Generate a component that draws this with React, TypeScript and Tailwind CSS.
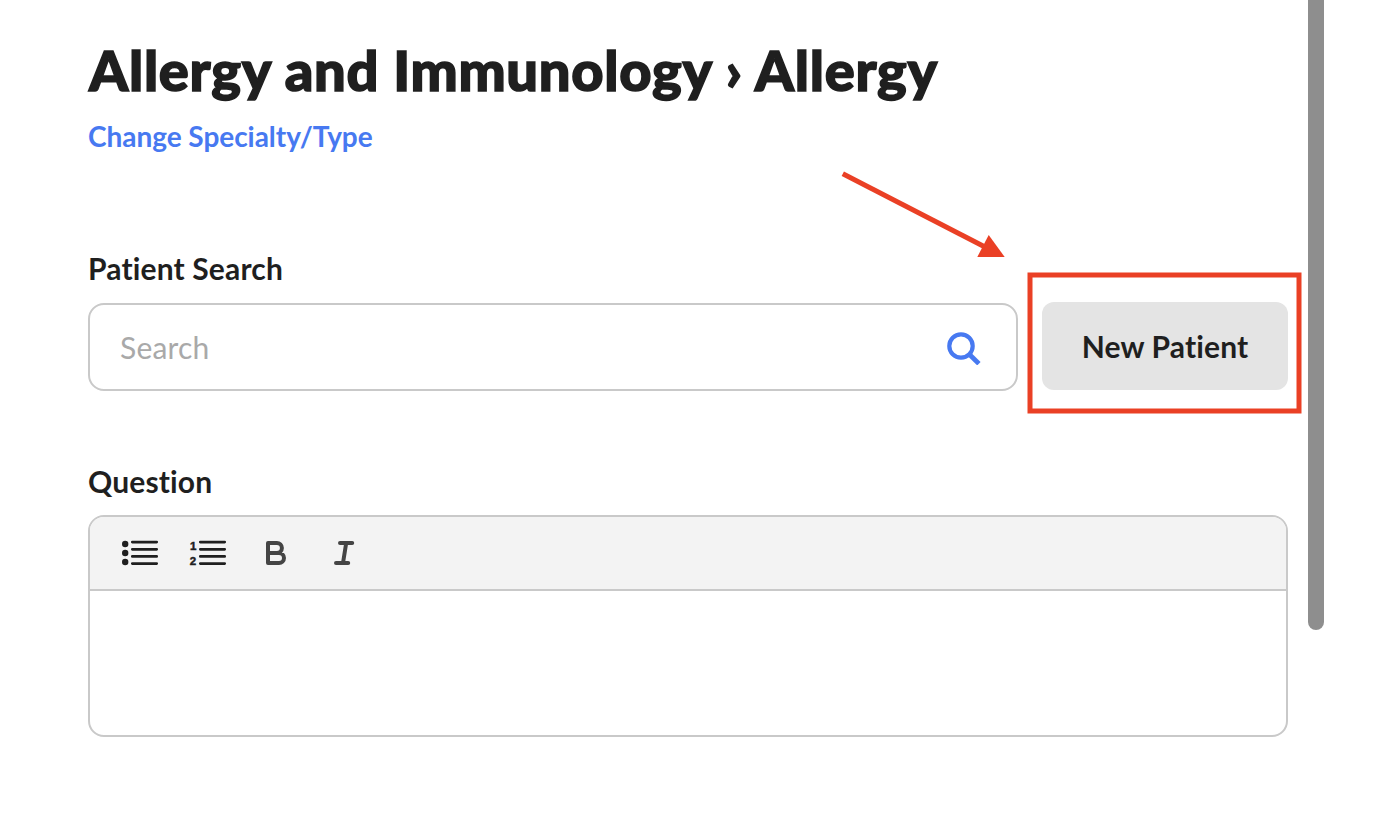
import type { ReactNode } from "react";

function SearchIcon() {
  return (
    <svg width="36" height="36" viewBox="0 0 36 36" fill="none" aria-hidden>
      <circle cx="15" cy="17" r="11.7" stroke="#4779f1" strokeWidth="4.2" />
      <path d="M23 25L32.9 34.7" stroke="#4779f1" strokeWidth="4.8" />
    </svg>
  );
}

function ListLines() {
  return (
    <path
      d="M11.3 7.1H35.7M11.3 14.3H35.7M11.3 21.4H35.7M11.3 28.6H35.7"
      stroke="#1f1f1f"
      strokeWidth="2.7"
      strokeLinecap="round"
    />
  );
}

function BulletListIcon() {
  return (
    <svg width="38" height="36" viewBox="0 0 38 36" aria-hidden>
      <circle cx="4.2" cy="9" r="3.2" fill="#1f1f1f" />
      <circle cx="4.2" cy="18" r="3.2" fill="#1f1f1f" />
      <circle cx="4.2" cy="27" r="3.2" fill="#1f1f1f" />
      <ListLines />
    </svg>
  );
}

function NumberListIcon() {
  return (
    <svg
      width="38"
      height="36"
      viewBox="0 0 38 36"
      className="font-['Liberation_Sans',sans-serif] text-[11.5px] font-bold"
      aria-hidden
    >
      <g fill="#1f1f1f" stroke="#1f1f1f" strokeWidth="0.5">
        <text x="1" y="14.8">1</text>
        <text x="0.7" y="30.1">2</text>
      </g>
      <ListLines />
    </svg>
  );
}

function BoldIcon() {
  return (
    <svg width="38" height="36" viewBox="0 0 38 36" fill="none" aria-hidden>
      <path
        d="M11 8H19.9A5 5 0 0 1 19.9 18H11ZM11 18H22A5 5 0 0 1 22 28H11Z"
        stroke="#444"
        strokeWidth="4"
        strokeLinejoin="round"
      />
    </svg>
  );
}

function ItalicIcon() {
  return (
    <svg width="38" height="36" viewBox="0 0 38 36" fill="none" aria-hidden>
      <path
        d="M15 8H27.2M11 28H23.2M21.2 8L18 28"
        stroke="#444"
        strokeWidth="4"
        strokeLinecap="round"
      />
    </svg>
  );
}

function ToolButton({ label, children }: { label: string; children: ReactNode }) {
  return (
    <button type="button" aria-label={label} className="shrink-0">
      {children}
    </button>
  );
}

/** Red arrow and frame that point out the New Patient button. */
function Callout() {
  return (
    <svg
      width="480"
      height="260"
      viewBox="830 160 480 260"
      fill="none"
      className="pointer-events-none absolute top-40 left-[830px]"
      aria-hidden
    >
      <path d="M842.8 173.8L986 247.5" stroke="#ea4025" strokeWidth="5" />
      <path d="M988.7 235L1004.7 257H977.3Z" fill="#ea4025" />
      <rect x="1030" y="275" width="269" height="136" stroke="#ea4025" strokeWidth="5" />
    </svg>
  );
}

export default function App() {
  return (
    <div className="relative flex h-[838px] w-[1392px] overflow-hidden bg-white font-['Lato',sans-serif] text-[#1f1f1f] [font-variant-ligatures:none]">
      <main className="ml-[88px] w-[1200px] shrink-0 pt-[35px]">
        <h1 className="pl-px text-[56px] leading-[70px] font-black tracking-[0.7px] whitespace-nowrap [-webkit-text-stroke:1.5px_#1f1f1f]">
          Allergy and Immunology › Allergy
        </h1>
        <a
          href="#"
          className="mt-3 block text-[28px] leading-[38px] font-bold tracking-[-0.04px] text-[#4779f1]"
        >
          Change Specialty/Type
        </a>

        <section className="mt-[93px]">
          <label
            htmlFor="patient"
            className="block text-[30px] leading-10 font-bold tracking-[0.15px]"
          >
            Patient Search
          </label>
          <div className="mt-[14px] flex gap-6">
            <div className="mt-px flex h-[88px] w-[930px] items-center rounded-2xl border-2 border-[#c9c9c9] pr-[34px] pl-[30px]">
              <input
                id="patient"
                placeholder="Search"
                className="min-w-0 flex-1 text-[30px] leading-10 tracking-[0.2px] outline-none placeholder:text-[#a9a9a9]"
              />
              <SearchIcon />
            </div>
            <button
              type="button"
              className="h-[88px] flex-1 rounded-xl bg-[#e4e4e4] text-[30px] font-bold tracking-[0.15px]"
            >
              New Patient
            </button>
          </div>
        </section>

        <section className="mt-[70px]">
          <h2 className="text-[30px] leading-10 font-bold tracking-[0.15px]">Question</h2>
          <div className="mt-[14px] h-[222px] overflow-hidden rounded-2xl border-2 border-[#c9c9c9]">
            <div className="flex h-[74px] items-center gap-[30px] border-b-2 border-[#c9c9c9] bg-[#f3f3f3] pl-[31px]">
              <ToolButton label="Bulleted list">
                <BulletListIcon />
              </ToolButton>
              <ToolButton label="Numbered list">
                <NumberListIcon />
              </ToolButton>
              <ToolButton label="Bold">
                <BoldIcon />
              </ToolButton>
              <ToolButton label="Italic">
                <ItalicIcon />
              </ToolButton>
            </div>
          </div>
        </section>
      </main>

      <div className="ml-5 h-[630px] w-4 rounded-b-full bg-[#8e8e8e]" />
      <Callout />
    </div>
  );
}
